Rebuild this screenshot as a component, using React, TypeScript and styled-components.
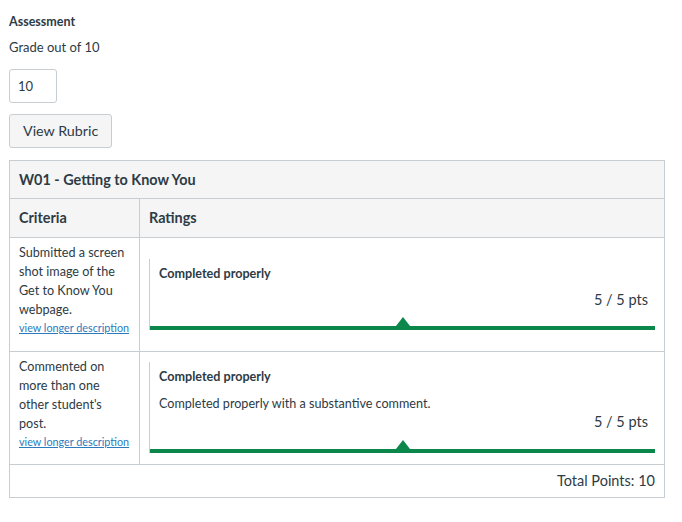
import styled, { createGlobalStyle } from "styled-components";

const GlobalStyle = createGlobalStyle`
  body {
    margin: 0;
    font-family: Lato, "Liberation Sans", sans-serif;
    color: #2d3b45;
    background: #fff;
  }
`;

const Page = styled.div`
  padding: 14px 0 0 9px;
  width: 656px;
`;

const Label = styled.div`
  font-size: 12.5px;
  font-weight: bold;
  line-height: 16px;
`;

const SubLabel = styled.div`
  font-size: 13px;
  line-height: 16px;
  margin-top: 9px;
`;

const GradeInput = styled.div`
  margin-top: 14px;
  height: 32px;
  width: 38px;
  border: 1px solid #c7cdd1;
  border-radius: 3px;
  font-size: 13px;
  line-height: 32px;
  padding-left: 8px;
`;

const Button = styled.div`
  margin-top: 11px;
  display: inline-block;
  height: 32px;
  line-height: 32px;
  padding: 0 13px;
  background: #f5f5f5;
  border: 1px solid #c7cdd1;
  border-radius: 3px;
  font-size: 14.3px;
`;

const Table = styled.div`
  margin-top: 12px;
  border: 1px solid #c7cdd1;
  display: grid;
  grid-template-columns: 130px 1fr;
`;

const Caption = styled.div`
  grid-column: 1 / 3;
  height: 37px;
  line-height: 37px;
  padding-left: 9px;
  background: #f5f5f5;
  font-size: 14.4px;
  font-weight: bold;
  border-bottom: 1px solid #c7cdd1;
`;

const HeadCell = styled.div<{ $first?: boolean }>`
  height: 38px;
  line-height: 38px;
  padding-left: 9px;
  background: #f5f5f5;
  font-size: 14.4px;
  font-weight: bold;
  border-bottom: 1px solid #c7cdd1;
  border-right: ${(p) => (p.$first ? "1px solid #c7cdd1" : "none")};
`;

const CriterionCell = styled.div`
  padding: 5px 6px 13.5px 9px;
  font-size: 12.6px;
  line-height: 19px;
  border-right: 1px solid #c7cdd1;
  border-bottom: 1px solid #c7cdd1;
`;

const MoreLink = styled.a`
  display: block;
  font-size: 10.8px;
  line-height: 18px;
  color: #2b7abc;
  text-decoration: underline;
`;

const RatingCell = styled.div`
  display: flex;
  align-items: center;
  padding: 0 9px;
  border-bottom: 1px solid #c7cdd1;
`;

const Rating = styled.div`
  flex: 1;
  border-left: 1px solid #c7cdd1;
  padding-top: 7px;
  display: flex;
  flex-direction: column;
`;

const RatingTitle = styled.div`
  font-size: 12.6px;
  font-weight: bold;
  line-height: 16px;
  padding-left: 9px;
`;

const RatingDesc = styled.div`
  font-size: 12.6px;
  line-height: 16px;
  margin-top: 11px;
  padding-left: 9px;
`;

const Points = styled.div<{ $gap: number }>`
  font-size: 14.5px;
  line-height: 18px;
  text-align: right;
  padding-right: 7px;
  margin-top: ${(p) => p.$gap}px;
`;

const Bar = styled.div<{ $gap: number }>`
  position: relative;
  margin-top: ${(p) => p.$gap}px;
  height: 4px;
  background: #0b874b;
  &::after {
    content: "";
    position: absolute;
    left: 50%;
    bottom: 4px;
    transform: translateX(-50%);
    border-left: 7px solid transparent;
    border-right: 7px solid transparent;
    border-bottom: 9px solid #0b874b;
  }
`;

const Footer = styled.div`
  grid-column: 1 / 3;
  height: 32px;
  line-height: 32px;
  text-align: right;
  padding-right: 9px;
  font-size: 14.5px;
`;

const rows = [
  {
    lines: ["Submitted a screen", "shot image of the", "Get to Know You", "webpage."],
    desc: "",
  },
  {
    lines: ["Commented on", "more than one", "other student's", "post."],
    desc: "Completed properly with a substantive comment.",
  },
];

export default function App() {
  return (
    <Page>
      <GlobalStyle />
      <Label>Assessment</Label>
      <SubLabel>Grade out of 10</SubLabel>
      <GradeInput>10</GradeInput>
      <Button>View Rubric</Button>
      <Table>
        <Caption>W01 - Getting to Know You</Caption>
        <HeadCell $first>Criteria</HeadCell>
        <HeadCell>Ratings</HeadCell>
        {rows.map((r, i) => [
          <CriterionCell key={"c" + i}>
            {r.lines.map((l) => (
              <div key={l}>{l}</div>
            ))}
            <MoreLink>view longer description</MoreLink>
          </CriterionCell>,
          <RatingCell key={"r" + i}>
            <Rating>
              <RatingTitle>Completed properly</RatingTitle>
              {r.desc && <RatingDesc>{r.desc}</RatingDesc>}
              <Points $gap={r.desc ? 1 : 9}>5 / 5 pts</Points>
              <Bar $gap={r.desc ? 18 : 17} />
            </Rating>
          </RatingCell>,
        ])}
        <Footer>Total Points: 10</Footer>
      </Table>
    </Page>
  );
}
